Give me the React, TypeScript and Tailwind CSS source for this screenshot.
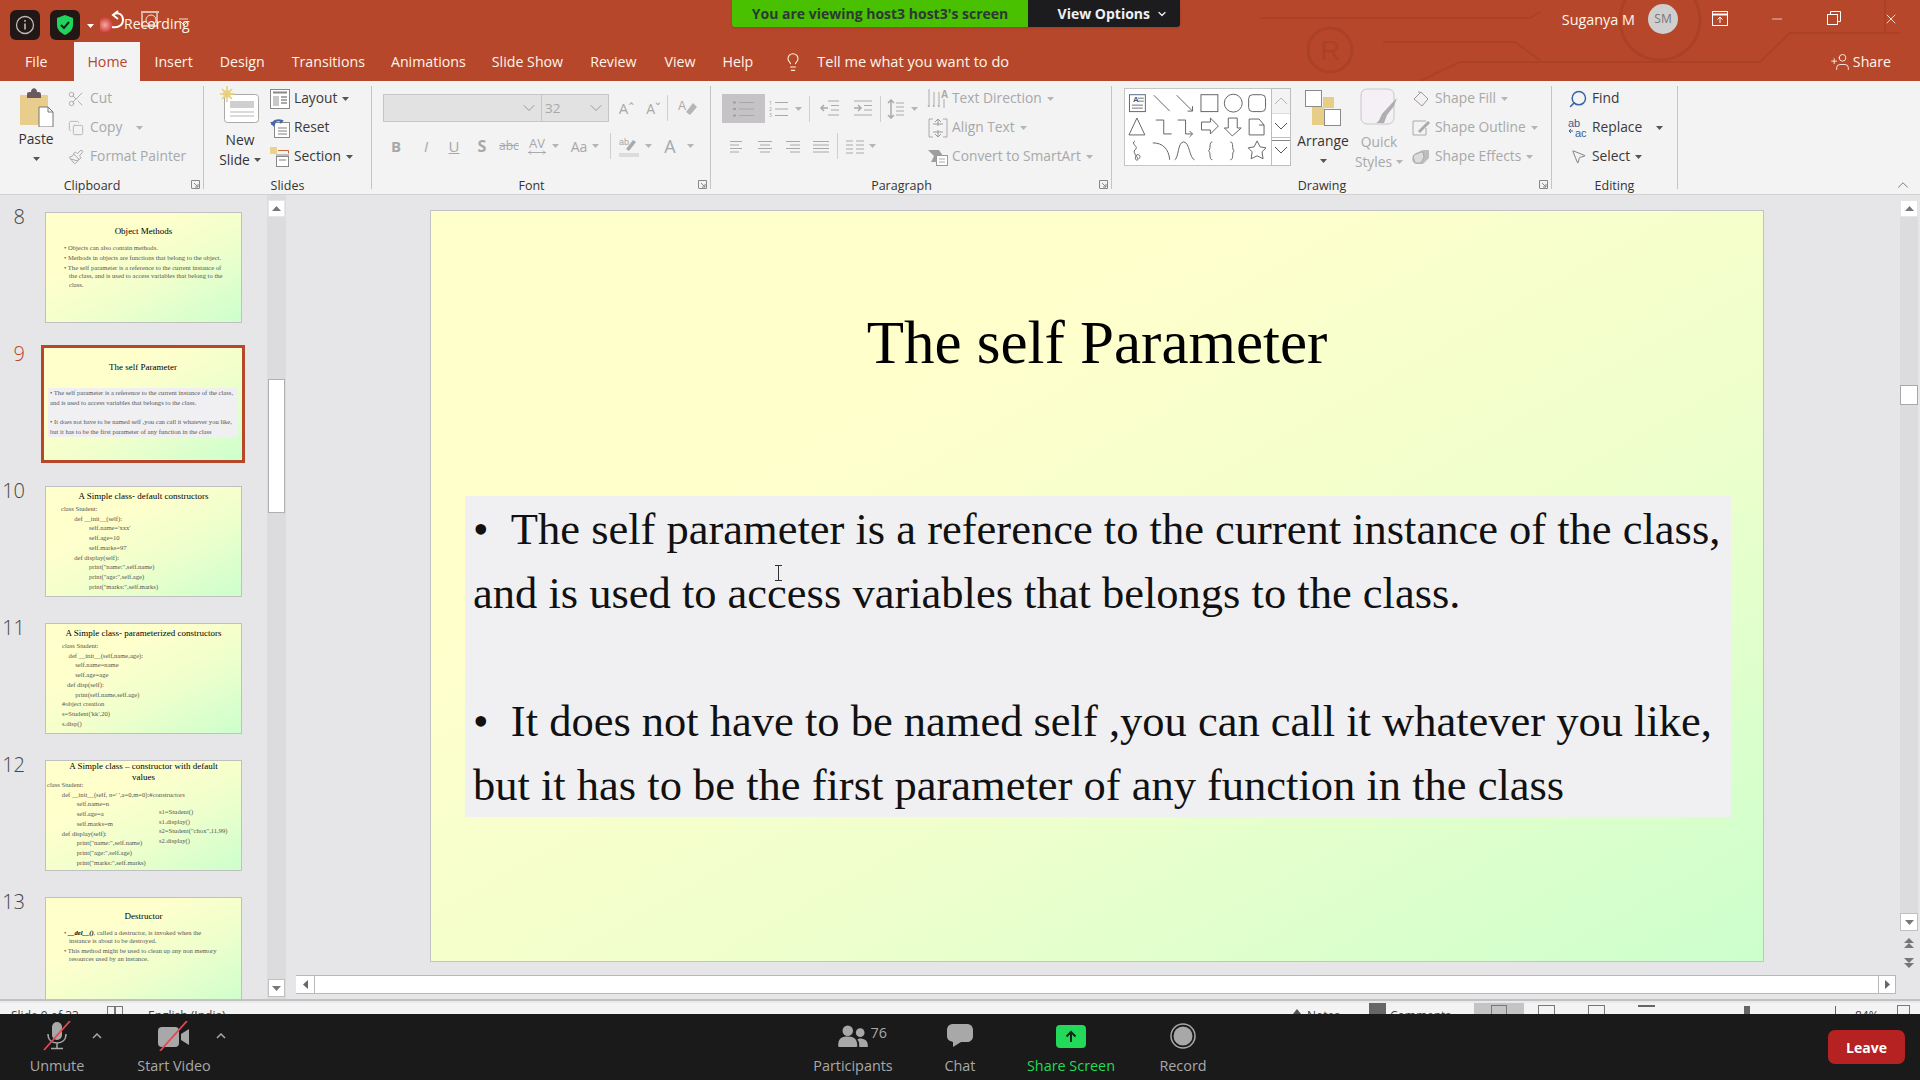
import React from "react";
import { ChevronDown, ChevronUp, Lightbulb, Scissors, Copy, Paintbrush, X, Minus, Search, MousePointer2, UserPlus } from "lucide-react";

const Caret = ({ light = false }: { light?: boolean }) => (
  <svg width="7" height="4" viewBox="0 0 7 4" className="inline-block shrink-0"><path d="M0 0h7L3.5 4z" fill={light ? "#b5b5b5" : "#555"} /></svg>
);

const Row = ({ icon, text, off = false, caret = false, far = false }: { icon: React.ReactNode; text: string; off?: boolean; caret?: boolean; far?: boolean }) => (
  <div className={off ? "flex h-[29px] items-center text-[#a8a8a8]" : "flex h-[29px] items-center text-[#3a3a3a]"}>
    <div className="flex w-[24px] shrink-0 items-center justify-center">{icon}</div>
    <span className="ml-[2px] whitespace-nowrap text-[13.8px]">{text}</span>
    {caret && <span className={far ? "ml-[14px] flex items-center" : "ml-[5px] flex items-center"}><Caret light={off} /></span>}
  </div>
);

const Launcher = () => (
  <svg width="9" height="9" viewBox="0 0 9 9" className="absolute bottom-[5px] right-[4px]"><path d="M.5 8V.5H8.500V8.500H.5M3 3l4 4M7 4v3H4" fill="none" stroke="#888" /></svg>
);

const Group = ({ label, widthClass, children, launcher = true }: { label: string; widthClass: string; children: React.ReactNode; launcher?: boolean }) => (
  <div className={`relative flex h-full shrink-0 flex-col ${widthClass}`}>
    <div className="h-[97px] overflow-hidden">{children}</div>
    <div className={launcher ? "pr-[20px] text-center text-[12.5px] leading-[16px] text-[#333]" : "pr-[1px] text-center text-[12.5px] leading-[16px] text-[#333]"}>{label}</div>
    {launcher && <Launcher />}
    <div className="absolute bottom-[5px] right-0 top-[5px] w-px bg-[#c4c4c4]" />
  </div>
);

const Sep = ({ h = "h-[26px]" }: { h?: string }) => <div className={`w-px shrink-0 bg-[#cfcfcf] ${h}`} />;

const PasteIcon = () => (
  <svg width="38" height="42" viewBox="0 0 38 42">
    <rect x="3" y="10" width="28" height="30" rx="1" fill="#e9cd8c" />
    <path d="M10 9c0-2 2-2 4-2 0-5 6-5 6 0 3 0 4 0 4 3v3H10z" fill="#6a5a5e" />
    <path d="M22 22h9l5 5v15H22z" fill="#fff" stroke="#777" />
    <path d="M31 22v5h5" fill="none" stroke="#777" />
  </svg>
);

const NewSlideIcon = () => (
  <svg width="40" height="42" viewBox="0 0 40 42">
    <rect x="4.500" y="9.500" width="34" height="28" rx="3" fill="#fff" stroke="#a9a9a9" />
    <rect x="10" y="16" width="24" height="7" fill="#cfcfcf" />
    <path d="M10 27h24M10 31h24" stroke="#b5b5b5" />
    <circle cx="7" cy="9" r="4" fill="#f0dc98" />
    <path d="M7 1v16M0 9h15M2 4l10 10M12 4 2 14" stroke="#e8cd7a" strokeWidth="1.500" />
  </svg>
);

const LayoutIcon = () => (
  <svg width="20" height="20" viewBox="0 0 20 20"><rect x=".5" y=".5" width="19" height="19" fill="#fff" stroke="#888" /><path d="M3 3.500h14" stroke="#888" strokeWidth="2" /><rect x="3" y="7" width="6" height="10" fill="#c8c8c8" /><path d="M11 8h6M11 11h6M11 14h6" stroke="#aaa" strokeWidth="2" /></svg>
);
const ResetIcon = () => (
  <svg width="20" height="20" viewBox="0 0 20 20"><rect x="4.500" y="4.500" width="15" height="15" fill="#fff" stroke="#888" /><path d="M8 10h9M8 13h9M8 16h9" stroke="#aaa" strokeWidth="1.500" /><path d="M2 7c1-4 6-6 10-4l-2 2" fill="none" stroke="#4668ad" strokeWidth="2" /><path d="M0 4l4 5 2-5z" fill="#4668ad" /></svg>
);
const SectionIcon = () => (
  <svg width="20" height="22" viewBox="0 0 20 22"><rect x="0" y="1" width="7" height="7" fill="#ecd28c" /><path d="M8 4.500h10.500v3" fill="none" stroke="#c96a3c" /><rect x="6.500" y="10.500" width="12" height="10" fill="#fff" stroke="#888" /><path d="M6 9h13" stroke="#888" /><path d="M9 14h7" stroke="#aaa" strokeWidth="1.500" /></svg>
);

const ParaIcon = ({ kind }: { kind: "l" | "c" | "r" | "j" }) => {
  const rows = kind === "l" ? [[1, 13], [1, 10], [1, 13], [1, 10]] : kind === "c" ? [[1, 15], [3, 13], [1, 15], [3, 13]] : kind === "r" ? [[1, 15], [5, 15], [1, 15], [5, 15]] : [[0, 16], [0, 16], [0, 16], [0, 16]];
  return <svg width="16" height="15" viewBox="0 0 16 15">{rows.map((r, i) => <path key={i} d={`M${r[0]} ${2.5 + i * 3.5}H${r[1]}`} stroke="#a9a9a9" />)}</svg>;
};

const Shapes = () => (
  <svg width="147" height="77" viewBox="0 0 147 77" fill="none" stroke="#666" className="-mt-[2px]">
    <rect x="4.500" y="7.500" width="16" height="17" fill="#fff" stroke="#5a6a80" /><text x="8" y="15" fontSize="8" fontWeight="700" fill="#3d5a95" stroke="none" fontFamily="Liberation Sans">A</text><path d="M7 18h11M7 21h11M13 11h6M13 14h6" stroke="#777" />
    <path d="M29 8l16 16M52 8l16 16" /><path d="M63 24h5v-5" />
    <rect x="76.500" y="7.500" width="17" height="17" /><circle cx="109" cy="16" r="9" /><rect x="124.500" y="7.500" width="17" height="17" rx="4" />
    <path d="M12 31l8 17H4zM31 33h8v14h8M53 33h8v14h7M65 44l3 3-3 3M77 35h9v-4l8 8-8 8v-4h-9zM104 31h9v10h4l-9 8-8-8h4zM125 32h10l5 6v10h-15zM140 38h-5" />
    <path d="M10 54c-5 3 5 6 0 9-3 3 4 8 3 10-2 2-4-3-1-5 3-1 4 2 2 4M28 56c10 0 16 6 17 17M50 73c4-1 3-18 9-18s6 17 11 18M88 55c-4 0-1 8-4 9 3 1 0 9 4 9M106 55c4 0 1 8 4 9-3 1 0 9-4 9M133 54l3 6 6 1-4 4 1 7-6-3-6 3 1-7-4-4 6-1z" />
  </svg>
);

const ScrollBtn = ({ d, cls }: { d: string; cls: string }) => (
  <div className={`flex items-center justify-center border-b border-[#bdbdbd] ${cls}`}>
    <svg width="14" height="8" viewBox="0 0 14 8"><path d={d} fill="none" stroke="#555" /></svg>
  </div>
);

const Ribbon = () => (
  <div className="flex h-[114px] shrink-0 border-b border-[#d2d2d2] bg-[#f3f3f3] font-['Open_Sans',sans-serif]">
    <Group label="Clipboard" widthClass="w-[204px]">
      <div className="flex pt-[4px]">
        <div className="flex w-[62px] shrink-0 flex-col items-center pl-[10px]">
          <PasteIcon />
          <span className="mt-[3px] text-[13.8px] leading-[18px] text-[#333]">Paste</span>
          <span className="mt-[5px] flex h-[12px] items-center"><Caret /></span>
        </div>
        <div className="-mt-[1px] ml-[2px]">
          <Row off icon={<Scissors size={18} strokeWidth={1.2} />} text="Cut" />
          <Row off caret far icon={<Copy size={16} strokeWidth={1.2} />} text="Copy" />
          <Row off icon={<Paintbrush size={16} strokeWidth={1.5} />} text="Format Painter" />
        </div>
      </div>
    </Group>

    <Group label="Slides" widthClass="w-[168px]" launcher={false}>
      <div className="flex pt-[4px]">
        <div className="flex w-[64px] shrink-0 flex-col items-center pl-[8px]">
          <NewSlideIcon />
          <span className="mt-[3px] text-[13.8px] leading-[20px] text-[#333]">New</span>
          <span className="flex items-center gap-[4px] text-[13.8px] leading-[20px] text-[#333]">Slide <Caret /></span>
        </div>
        <div className="-mt-[1px]">
          <Row caret icon={<LayoutIcon />} text="Layout" />
          <Row icon={<ResetIcon />} text="Reset" />
          <Row caret icon={<SectionIcon />} text="Section" />
        </div>
      </div>
    </Group>

    <Group label="Font" widthClass="w-[339px]">
      <div className="pl-[11px] pt-[13px]">
        <div className="flex items-center">
          <div className="flex h-[28px] w-[159px] items-center justify-end border border-[#c6c6c6] bg-[#e2e2e2] pr-[2px]"><ChevronDown size={20} strokeWidth={1} color="#8c8c8c" /></div>
          <div className="flex h-[28px] w-[67px] items-center justify-between border border-l-0 border-[#c6c6c6] bg-[#e2e2e2] pl-[3px] pr-[2px] text-[13.5px] text-[#a8a8a8]">32<ChevronDown size={20} strokeWidth={1} color="#8c8c8c" /></div>
          <div className="flex w-[31px] justify-center pl-[4px] text-[15px] text-[#a8a8a8]">Aˆ</div>
          <div className="flex w-[27px] justify-center text-[14px] text-[#a8a8a8]">Aˇ</div>
          <Sep />
          <div className="flex w-[40px] justify-center"><svg width="20" height="20" viewBox="0 0 20 20"><text x="0" y="12" fontSize="12" fill="#a8a8a8" fontFamily="Liberation Sans">A</text><path d="M8 14l7-9 4 4-7 8z" fill="#b5b5b5" /></svg></div>
        </div>
        <div className="mt-[10px] flex h-[28px] items-center text-[#a8a8a8]">
          <div className="w-[3px] shrink-0" />
          <span className="w-[20px] text-center text-[15px] font-bold">B</span>
          <span className="ml-[10px] w-[20px] text-center text-[15px] italic">I</span>
          <span className="ml-[7px] w-[22px] text-center text-[15px] underline">U</span>
          <span className="ml-[7px] w-[20px] text-center text-[16px] font-bold">S</span>
          <span className="ml-[6px] w-[22px] text-center text-[12px] line-through">abc</span>
          <span className="ml-[4px] flex w-[26px] flex-col items-center text-[13px] leading-[13px]">AV<svg width="18" height="5" viewBox="0 0 18 5"><path d="M0 2.500h18M3 .5 1 2.500l2 2M15 .5l2 2-2 2" fill="none" stroke="#aaa" /></svg></span>
          <span className="ml-[2px] flex w-[8px] items-center"><Caret light /></span>
          <span className="ml-[8px] w-[22px] text-center text-[14px]">Aa</span>
          <span className="ml-[2px] flex w-[8px] items-center"><Caret light /></span>
          <div className="ml-[10px]"><Sep /></div>
          <div className="ml-[7px] flex w-[22px] justify-center"><svg width="21" height="21" viewBox="0 0 21 21"><text x="0" y="9" fontSize="9" fill="#a8a8a8" fontFamily="Liberation Sans">ab</text><path d="M7 13l7-9 3 2-7 9z" fill="#aaa" /><rect x="0" y="17" width="20" height="4" fill="#dcdcdc" /></svg></div>
          <span className="ml-[5px] flex w-[8px] items-center"><Caret light /></span>
          <span className="ml-[7px] w-[20px] text-center text-[18px]">A</span>
          <span className="ml-[7px] flex w-[8px] items-center"><Caret light /></span>
        </div>
      </div>
    </Group>

    <Group label="Paragraph" widthClass="w-[401px]">
      <div className="flex pt-[4px]">
        <div className="w-[213px] shrink-0 pl-[11px] pt-[9px]">
          <div className="flex h-[29px] items-center">
            <div className="flex h-[29px] w-[43px] items-center justify-center bg-[#c5c3c6]"><svg width="22" height="18" viewBox="0 0 22 18"><path d="M6 2.500h15M6 9h15M6 15.500h15" stroke="#a8a8a8" /><path d="M0 2.500h3M0 9h3M0 15.500h3" stroke="#a0a0a0" strokeWidth="2" /></svg></div>
            <div className="ml-[3px] flex w-[22px] justify-center"><svg width="20" height="18" viewBox="0 0 20 18"><text x="0" y="5" fontSize="5" fill="#999">1</text><text x="0" y="11" fontSize="5" fill="#999">2</text><text x="0" y="17" fontSize="5" fill="#999">3</text><path d="M6 2.500h13M6 9h13M6 15.500h13" stroke="#a8a8a8" /></svg></div>
            <span className="ml-[5px] flex w-[8px] items-center"><Caret light /></span>
            <div className="ml-[6px]"><Sep /></div>
            <div className="ml-[10px] flex w-[20px] justify-center"><svg width="20" height="18" viewBox="0 0 20 18"><path d="M8 1h11M11 5.500h8M11 10h8M8 15h11" stroke="#aaa" /><path d="M8 8H1m3-3L1 8l3 3" stroke="#aaa" fill="none" strokeWidth="1.500" /></svg></div>
            <div className="ml-[13px] flex w-[20px] justify-center"><svg width="20" height="18" viewBox="0 0 20 18"><path d="M1 1h18M11 5.500h8M11 10h8M1 15h18" stroke="#aaa" /><path d="M1 8h7M5 5l3 3-3 3" stroke="#aaa" fill="none" strokeWidth="1.500" /></svg></div>
            <div className="ml-[7px]"><Sep /></div>
            <div className="ml-[5px] flex w-[20px] justify-center"><svg width="18" height="20" viewBox="0 0 18 20"><path d="M4 1v18M1 4l3-3 3 3M1 16l3 3 3-3" stroke="#aaa" fill="none" strokeWidth="1.500" /><path d="M9 4h8M9 8h8M9 12h8M9 16h8" stroke="#aaa" /></svg></div>
            <span className="ml-[5px] flex w-[8px] items-center"><Caret light /></span>
          </div>
          <div className="mt-[9px] flex h-[28px] items-center pl-[7px]">
            <div className="flex w-[16px] justify-center"><ParaIcon kind="l" /></div>
            <div className="ml-[12px] flex w-[16px] justify-center"><ParaIcon kind="c" /></div>
            <div className="ml-[12px] flex w-[16px] justify-center"><ParaIcon kind="r" /></div>
            <div className="ml-[12px] flex w-[16px] justify-center"><ParaIcon kind="j" /></div>
            <div className="ml-[8px]"><Sep /></div>
            <div className="ml-[8px] flex w-[18px] justify-center"><svg width="18" height="15" viewBox="0 0 18 15"><path d="M0 2h7M0 6h7M0 10h7M0 14h7M10 2h8M10 6h8M10 10h8M10 14h8" stroke="#aaa" /></svg></div>
            <span className="ml-[5px] flex w-[8px] items-center"><Caret light /></span>
          </div>
        </div>
        <div className="-mt-[1px] ml-[2px]">
          <Row off caret icon={<svg width="22" height="22" viewBox="0 0 22 22"><path d="M2 1v18M7 4v15M12 4v15M2 19l-1-2M7 19l-1-2M12 19l-1-2" stroke="#aaa" /><text x="14" y="10" fontSize="10" fontWeight="700" fill="#aaa" fontFamily="Liberation Sans">A</text><path d="M17 11v9" stroke="#aaa" /></svg>} text="Text Direction" />
          <Row off caret icon={<svg width="20" height="20" viewBox="0 0 20 20"><path d="M5 1H1v18h4M15 1h4v18h-4" stroke="#aaa" fill="#f4f0f4" /><path d="M5 6h10M5 14h10M10 2v6M10 12v6M7 4l3-3 3 3M7 16l3 3 3-3" stroke="#999" fill="none" /></svg>} text="Align Text" />
          <Row off caret icon={<svg width="20" height="18" viewBox="0 0 20 18"><path d="M0 2h11l4 6-4 6H3l3-6z" fill="#9e9e9e" /><rect x="8.500" y="7.500" width="11" height="10" fill="#fff" stroke="#999" /><path d="M11 11h6M11 14h6" stroke="#aaa" /></svg>} text="Convert to SmartArt" />
        </div>
      </div>
    </Group>

    <Group label="Drawing" widthClass="w-[440px]">
      <div className="flex pl-[12px] pt-[7px]">
        <div className="flex h-[78px] w-[147px] shrink-0 border border-r-0 border-[#c6c6c6] bg-white"><Shapes /></div>
        <div className="flex h-[78px] w-[20px] shrink-0 flex-col border border-[#bdbdbd] bg-[#f3f3f3]">
          <ScrollBtn d="M1 7l6-6 6 6" cls="h-[25px] opacity-40" />
          <ScrollBtn d="M1 1l6 6 6-6" cls="h-[24px] bg-white" />
          <div className="flex flex-1 flex-col items-center bg-white"><div className="mb-[3px] h-[3px] w-full border-b border-[#888]" /><svg width="14" height="12" viewBox="0 0 14 12"><path d="M1 3l6 6 6-6" fill="none" stroke="#555" /></svg></div>
        </div>
        <div className="ml-[6px] flex w-[52px] shrink-0 flex-col items-center">
          <svg width="36" height="36" viewBox="0 0 36 36" className="mt-[2px]"><rect x="18" y="7" width="11" height="11" fill="#e8cd86" /><rect x="7" y="17" width="12" height="18" fill="#e8cd86" /><rect x=".5" y=".5" width="16" height="16" fill="#fff" stroke="#8a8a8a" /><rect x="19.500" y="19.500" width="16" height="16" fill="#fff" stroke="#8a8a8a" /></svg>
          <span className="mt-[6px] text-[13.8px] leading-[18px] text-[#333]">Arrange</span>
          <span className="mt-[5px] flex h-[12px] items-center"><Caret /></span>
        </div>
        <div className="flex w-[60px] shrink-0 flex-col items-center">
          <svg width="38" height="38" viewBox="0 0 38 38" className="mt-[0px]"><rect x="1" y="1" width="33" height="35" rx="6" fill="#f5f0f5" stroke="#c8c8c8" /><path d="M22 26l10-11 5-5-3 8-7 9-3 8h-8c3-1 4-5 6-9z" fill="#aeaeae" /></svg>
          <span className="mt-[6px] text-[13.8px] leading-[20px] text-[#a8a8a8]">Quick</span>
          <span className="flex items-center gap-[4px] text-[13.8px] leading-[20px] text-[#a8a8a8]">Styles <Caret light /></span>
        </div>
        <div className="-mt-[4px]">
          <Row off caret icon={<svg width="18" height="18" viewBox="0 0 18 18"><path d="M2 9l7-7 7 7-6 7z" fill="#f5f0f5" stroke="#999" /><path d="M7 3V1" stroke="#999" /></svg>} text="Shape Fill" />
          <Row off caret icon={<svg width="20" height="18" viewBox="0 0 20 18"><path d="M15 2H2v14h13V9" fill="none" stroke="#aaa" /><path d="M7 12l10-10 2 2L9 14z" fill="#aaa" /></svg>} text="Shape Outline" />
          <Row off caret icon={<svg width="20" height="18" viewBox="0 0 20 18"><path d="M2 14c-2-3 0-7 3-9l7-3h6v8l-6 6H5z" fill="#bdbdbd" /><path d="M2 8c3-2 7-4 10-4l1 5-3 6H4z" fill="#dcdcdc" stroke="#aaa" /></svg>} text="Shape Effects" />
        </div>
      </div>
    </Group>

    <Group label="Editing" widthClass="w-[126px]" launcher={false}>
      <div className="pl-[14px] pt-[3px]">
        <Row icon={<Search size={20} strokeWidth={1.800} color="#3864a8" className="-scale-x-100" />} text="Find" />
        <Row caret far icon={<svg width="20" height="22" viewBox="0 0 20 22"><text x="0" y="10" fontSize="11" fill="#3b5d92" fontFamily="Liberation Sans">ab</text><text x="7" y="20" fontSize="11" fill="#3b5d92" fontFamily="Liberation Sans">ac</text><path d="M1 14h4M3 12l-2 2 2 2" stroke="#3b5d92" fill="none" /></svg>} text="Replace" />
        <Row caret icon={<MousePointer2 size={17} strokeWidth={1} color="#555" />} text="Select" />
      </div>
    </Group>
    <div className="relative flex-1">
      <ChevronUp size={18} strokeWidth={1} color="#555" className="absolute bottom-[0px] right-[8px]" />
    </div>
  </div>
);

const Thumb = ({ title, lines, selected = false, titleCls = "pt-[13px]" }: { title: string; lines: React.ReactNode; selected?: boolean; titleCls?: string }) => (
  <div className={selected
    ? "h-[118px] w-[204px] shrink-0 border-[3px] border-[#b7472a] bg-white -mt-[4px] -ml-[4px] mr-[-4px]"
    : "h-[111px] w-[197px] shrink-0 border border-[#c0c0c0]"}>
    <div className="h-full w-full overflow-hidden bg-linear-to-br from-[#ffffcc] from-30% via-[#f0ffcc] via-60% to-[#ccffcc] font-['Liberation_Serif',serif]">
      <div className={`text-center text-[9px] leading-[11px] text-black ${titleCls}`}>{title}</div>
      {lines}
    </div>
  </div>
);

const code = "whitespace-pre text-[6.600px] leading-[9.700px] text-[#555]";
const bullet = "pl-[5px] -indent-[5px]";

const thumbs: { n: number; node: React.ReactNode }[] = [
  { n: 8, node: <Thumb title="Object Methods" lines={<div className="mt-[7px] pl-[18px] pr-[8px] text-[6.600px] leading-[8.300px] text-[#555]"><div className={bullet}>• Objects can also contain methods.</div><div className={`mt-[1.700px] ${bullet}`}>• Methods in objects are functions that belong to the object.</div><div className={`mt-[1.700px] pr-[8px] ${bullet}`}>• The self parameter is a reference to the current instance of the class, and is used to access variables that belong to the class.</div></div>} /> },
  { n: 9, node: <Thumb selected title="The self Parameter" titleCls="pt-[14px]" lines={<div className="mx-[4px] mt-[15px] bg-[#f0f0f3] px-[2px] text-[6.600px] leading-[10px] text-[#555]"><div className="whitespace-nowrap">•  The self parameter is a reference to the current instance of the class,</div><div className="whitespace-nowrap">and is used to access variables that belongs to the class.</div><div className="mt-[8.500px] whitespace-nowrap">•  It does not have to be named self ,you can call it whatever you like,</div><div className="whitespace-nowrap">but it has to be the first parameter of any function in the class</div></div>} /> },
  { n: 10, node: <Thumb title="A Simple class- default constructors" titleCls="pt-[4px]" lines={<div className={`mt-[2px] pl-[15px] ${code}`}>{"class Student:\n        def __init__(self):\n                 self.name='xxx'\n                 self.age=10\n                 self.marks=97\n        def display(self):\n                 print(\"name:\",self.name)\n                 print(\"age:\",self.age)\n                 print(\"marks:\",self.marks)"}</div>} /> },
  { n: 11, node: <Thumb title="A Simple class- parameterized constructors" titleCls="pt-[4px]" lines={<div className={`mt-[2px] pl-[16px] ${code}`}>{"class Student:\n    def __init__(self,name,age):\n        self.name=name\n        self.age=age\n   def disp(self):\n        print(self.name,self.age)\n#object creation\ns=Student('kk',20)\ns.disp()"}</div>} /> },
  { n: 12, node: <Thumb title="A Simple class – constructor with default values" titleCls="px-[20px]" lines={<div className="relative -mt-[3px]"><div className={`pl-[1px] ${code}`}>{"class Student:\n         def __init__(self, n=' ',a=0,m=0):#constructors\n                  self.name=n\n                  self.age=a\n                  self.marks=m\n         def display(self):\n                  print(\"name:\",self.name)\n                  print(\"age:\",self.age)\n                  print(\"marks:\",self.marks)"}</div><div className={`absolute left-[113px] top-[27px] ${code}`}>{"s1=Student()\ns1.display()\ns2=Student(\"chox\",11,99)\ns2.display()"}</div></div>} /> },
  { n: 13, node: <Thumb title="Destructor" titleCls="pt-[13px]" lines={<div className="mt-[7px] pl-[18px] pr-[18px] text-[6.600px] leading-[8px] text-[#555]"><div className={bullet}>• <b className="italic text-black">__del__()</b>, called a destructor, is invoked when the instance is about to be destroyed.</div><div className={`mt-[2px] ${bullet}`}>• This method might be used to clean up any non memory resources used by an instance.</div></div>} /> },
];

const Sidebar = () => (
  <div className="flex h-full w-[290px] shrink-0 bg-[#e6e6e8]">
    <div className="h-full w-[267px] shrink-0 overflow-hidden pt-[17px]">
      <div className="flex flex-col gap-[26px]">
        {thumbs.map((t) => (
          <div key={t.n} className="flex h-[111px]">
            <div className={t.n === 9 ? "-mt-[5px] w-[25px] shrink-0 text-right font-['Open_Sans',sans-serif] text-[20px] font-light leading-[20px] text-[#b7472a]" : "-mt-[5px] w-[25px] shrink-0 text-right font-['Open_Sans',sans-serif] text-[20px] font-light leading-[20px] text-[#444]"}>{t.n}</div>
            <div className="ml-[20px]">{t.node}</div>
          </div>
        ))}
      </div>
    </div>
    <div className="flex h-full w-[19px] flex-col bg-[#dcdcde] px-px pt-[5px]">
      <div className="flex h-[17px] shrink-0 items-center justify-center border border-[#e6e6e8] bg-white"><svg width="9" height="5" viewBox="0 0 9 5"><path d="M4.500 0L9 5H0z" fill="#777" /></svg></div>
      <div className="mt-[162px] h-[134px] shrink-0 border border-[#b0b0b0] bg-white" />
      <div className="flex-1" />
      <div className="mb-[2px] flex h-[18px] shrink-0 items-center justify-center border border-[#c0c0c0] bg-white"><svg width="9" height="5" viewBox="0 0 9 5"><path d="M0 0h9L4.500 5z" fill="#777" /></svg></div>
    </div>
  </div>
);

const MainSlide = () => (
  <div className="relative flex h-[752px] w-[1334px] shrink-0 flex-col border border-[#c3c3c3] bg-linear-to-br from-[#ffffcc] from-30% via-[#f0ffcc] via-60% to-[#ccffcc] font-['Liberation_Serif',serif] text-black">
    <div className="mt-[95px] h-[74px] text-center text-[61px] leading-[74px]">The self Parameter</div>
    <div className="ml-[34px] mt-[116px] h-[321px] w-[1266px] bg-[#f0f0f3] pl-[8px] pt-[1px] text-[44.500px] leading-[64px] text-[#111]">
      <div className="whitespace-nowrap">•&nbsp;&nbsp;The self parameter is a reference to the current instance of the class,</div>
      <div className="whitespace-nowrap">and is used to access variables that belongs to the class.</div>
      <div className="h-[64px]" />
      <div className="whitespace-nowrap">•&nbsp;&nbsp;It does not have to be named self ,you can call it whatever you like,</div>
      <div className="whitespace-nowrap">but it has to be the first parameter of any function in the class</div>
    </div>
    <svg width="9" height="16" viewBox="0 0 9 16" className="absolute left-[343px] top-[354px]"><path d="M1 .5h7M1 15.500h7M4.500 .5v15" stroke="#333" /></svg>
  </div>
);

const Arrow2 = ({ up }: { up: boolean }) => (
  <svg width="10" height="11" viewBox="0 0 10 11" className="mx-auto"><path d={up ? "M5 0l5 5H0zM5 5l5 5H0z" : "M0 0h10L5 5zM0 5h10L5 10z"} fill="#777" /></svg>
);

const Main = () => (
  <div className="flex h-full flex-1 bg-[#e6e6e8]">
    <div className="flex h-full w-[1606px] shrink-0 flex-col">
      <div className="flex-1 pl-[140px] pt-[15px]"><MainSlide /></div>
      <div className="mb-[5px] ml-[6px] flex h-[19px] w-[1600px] shrink-0 border-y border-[#b8b8b8] bg-white">
        <div className="flex w-[19px] items-center justify-center border-r border-[#b8b8b8]"><svg width="5" height="9" viewBox="0 0 5 9"><path d="M5 0v9L0 4.500z" fill="#666" /></svg></div>
        <div className="flex-1" />
        <div className="flex w-[18px] items-center justify-center border-x border-[#b8b8b8]"><svg width="5" height="9" viewBox="0 0 5 9"><path d="M0 0v9l5-4.500z" fill="#666" /></svg></div>
      </div>
    </div>
    <div className="ml-[4px] flex h-full w-[18px] shrink-0 flex-col pt-[5px]">
      <div className="flex h-[713px] flex-col bg-[#dcdcde]">
        <div className="flex h-[17px] shrink-0 items-center justify-center border border-[#e6e6e8] bg-white"><svg width="9" height="5" viewBox="0 0 9 5"><path d="M4.500 0L9 5H0z" fill="#777" /></svg></div>
        <div className="mt-[168px] h-[20px] shrink-0 border border-[#a8a8a8] bg-white" />
        <div className="flex-1" />
      </div>
      <div className="flex h-[18px] shrink-0 items-center justify-center border border-[#c0c0c0] bg-white"><svg width="9" height="5" viewBox="0 0 9 5"><path d="M0 0h9L4.500 5z" fill="#777" /></svg></div>
      <div className="mt-[7px]"><Arrow2 up /></div>
      <div className="mt-[9px]"><Arrow2 up={false} /></div>
    </div>
  </div>
);

const Status = () => (
  <div className="flex h-[15px] shrink-0 flex-col bg-[#f3f3f3]">
    <div className="h-[4px] shrink-0 border-t-2 border-[#c2c2c2] bg-[#e9e9e9]" />
    <div className="relative flex flex-1 items-start overflow-hidden whitespace-nowrap pl-[11px] pt-[6px] font-['Open_Sans',sans-serif] text-[12px] leading-[14px] text-[#444]">
      <span className="w-[96px]">Slide 9 of 33</span>
      <svg width="17" height="12" viewBox="0 0 17 12" className="-mt-[3px]"><rect x=".5" y=".5" width="7" height="11" fill="none" stroke="#777" /><rect x="8.500" y=".5" width="7" height="11" fill="none" stroke="#777" /></svg>
      <span className="ml-[24px] w-[1145px]">English (India)</span>
      <span className="flex w-[181px]"><svg width="8" height="5" viewBox="0 0 8 5" className="mr-[6px]"><path d="M4 0l4 5H0z" fill="#555" /></svg>Notes<span className="-mt-[6px] ml-[29px] h-[20px] w-[17px] bg-[#666]" /><span className="ml-[4px]">Comments</span></span>
      <span className="-mt-[6px] flex h-[20px] w-[50px] justify-center bg-[#c5c3c5] pt-[2px]"><span className="h-[16px] w-[16px] border border-[#777]" /></span>
      <span className="-mt-[4px] ml-[14px] h-[16px] w-[17px] border border-[#777]" />
      <span className="-mt-[4px] ml-[33px] h-[16px] w-[17px] border border-[#777]" />
      <span className="-mt-[4px] ml-[33px] h-[16px] w-[17px] border-t-2 border-[#666]" />
      <span className="-mt-[3px] ml-[89px] h-[14px] w-[6px] bg-[#666]" />
      <span className="-mt-[3px] ml-[85px] h-[14px] w-px bg-[#666]" />
      <span className="ml-[19px]">84%</span>
      <span className="-mt-[4px] ml-[18px] h-[16px] w-[13px] border border-[#777]" />
    </div>
  </div>
);

const BarBtn = ({ icon, label, cls = "text-[#a8a8a8]", wcls }: { icon: React.ReactNode; label: string; cls?: string; wcls: string }) => (
  <div className={`flex h-full shrink-0 flex-col items-center ${wcls}`}>
    <div className="relative flex h-[38px] items-center justify-center pt-[6px]">{icon}</div>
    <div className={`mt-[5px] whitespace-nowrap text-[14.400px] leading-[18px] ${cls}`}>{label}</div>
  </div>
);

const UpCaret = () => <svg width="10" height="6" viewBox="0 0 10 6"><path d="M1 5l4-4 4 4" fill="none" stroke="#a8a8a8" strokeWidth="1.500" /></svg>;

const ZoomBar = () => (
  <div className="flex h-[66px] shrink-0 bg-[#1a1a1a] font-['Open_Sans',sans-serif]">
    <BarBtn wcls="ml-[7px] w-[100px]" label="Unmute" icon={
      <svg width="30" height="30" viewBox="0 0 30 30"><rect x="10" y="1" width="10" height="18" rx="5" fill="#a8a8a8" /><path d="M6 13c0 6 4 9 9 9s9-3 9-9M15 22v5M9 27.500h12" fill="none" stroke="#a8a8a8" strokeWidth="1.500" /><path d="M2 29L28 0" stroke="#e5484d" strokeWidth="1.800" /></svg>} />
    <div className="-ml-[15px] w-[15px] pt-[19px]"><UpCaret /></div>
    <BarBtn wcls="ml-[12px] w-[110px]" label="Start Video" icon={
      <svg width="32" height="30" viewBox="0 0 32 30"><rect x="0" y="6" width="21" height="20" rx="4" fill="#a8a8a8" /><path d="M23 13l8-5v16l-8-5z" fill="#a8a8a8" /><path d="M2 30L29 0" stroke="#e5484d" strokeWidth="1.800" /></svg>} />
    <div className="-ml-[13px] w-[13px] pt-[19px]"><UpCaret /></div>
    <div className="w-[574px] shrink-0" />
    <BarBtn wcls="w-[100px]" label="Participants" icon={
      <div className="relative">
        <svg width="31" height="23" viewBox="0 0 32 24"><circle cx="10" cy="6" r="5.500" fill="#a8a8a8" /><circle cx="23" cy="8" r="4.500" fill="#a8a8a8" /><path d="M0 22c0-8 3-10 10-10s10 3 10 10c0 1-1 1-2 1H2c-1 0-2 0-2-1zM22 14c6 0 9 2 9 8 0 1 0 1-1 1h-8c0-4 0-6-2-8z" fill="#a8a8a8" /></svg>
        <span className="absolute left-[33px] -top-[1px] text-[14.400px] leading-[18px] text-[#a8a8a8]">76</span>
      </div>} />
    <BarBtn wcls="ml-[7px] w-[100px]" label="Chat" icon={
      <svg width="26" height="24" viewBox="0 0 26 24"><path d="M6 0h14c3 0 6 2 6 6v6c0 4-3 6-6 6h-6l-8 5v-5c-3-1-6-2-6-6V6c0-4 3-6 6-6z" fill="#a8a8a8" /></svg>} />
    <BarBtn wcls="ml-[11px] w-[100px]" label="Share Screen" cls="text-[#23d959]" icon={
      <div className="flex h-[23px] w-[30px] items-center justify-center rounded-[4px] bg-[#23d959]"><svg width="12" height="13" viewBox="0 0 12 13"><path d="M6 12V2M1.500 6.500 6 2l4.500 4.500" fill="none" stroke="#10291a" strokeWidth="2" /></svg></div>} />
    <BarBtn wcls="ml-[12px] w-[100px]" label="Record" icon={
      <svg width="26" height="26" viewBox="0 0 26 26"><circle cx="13" cy="13" r="12" fill="none" stroke="#a8a8a8" strokeWidth="1.500" /><circle cx="13" cy="13" r="9.500" fill="#a8a8a8" /></svg>} />
    <div className="flex-1" />
    <div className="mr-[15px] mt-[16px] flex h-[34px] w-[77px] items-center justify-center rounded-[7px] bg-[#b62222] text-[14px] font-bold text-white">Leave</div>
  </div>
);

const Circuit = () => (
  <svg className="absolute right-0 top-0" width="660" height="81" viewBox="0 0 660 81" fill="none" stroke="#ab4226" strokeWidth="2">
    <circle cx="70" cy="50" r="22" strokeWidth="3" />
    <text x="60" y="60" fontSize="28" fill="#ab4226" stroke="none" fontFamily="Liberation Sans">R</text>
    <path d="M123 42h132l25 18M0 18h270l10-6" />
    <circle cx="400" cy="20" r="40" strokeWidth="3" />
    <path d="M160 81l40-19h300l30-29h110M625 0v33" />
  </svg>
);

const TitleBar = () => (
  <div className="relative h-[81px] shrink-0 overflow-hidden bg-[#b7472a] font-['Open_Sans',sans-serif] text-[#fff5ea]">
    <Circuit />
    <div className="relative flex h-[42px] items-start">
      <div className="ml-[10px] mt-[10px] flex h-[30px] w-[30px] items-center justify-center rounded-[6px] bg-[#211815]"><svg width="20" height="20" viewBox="0 0 20 20"><circle cx="10" cy="10" r="8.500" fill="none" stroke="#bbb" strokeWidth="1.300" /><path d="M10 8.500v6M10 5v1.800" stroke="#bbb" strokeWidth="1.600" /></svg></div>
      <div className="ml-[10px] mt-[10px] flex h-[30px] w-[30px] items-center justify-center rounded-[6px] bg-[#211815]"><svg width="16" height="20" viewBox="0 0 16 20"><path d="M8 0l8 3v7c0 5-4 8-8 10-4-2-8-5-8-10V3z" fill="#22d35c" /><path d="M4 10l3 3 5-6" fill="none" stroke="#102818" strokeWidth="2" /></svg></div>
      <div className="ml-[7px] mt-[24px]"><svg width="7" height="4" viewBox="0 0 7 4"><path d="M0 0h7L3.500 4z" fill="#fff" /></svg></div>
      <div className="relative ml-[6px] mt-[10px] flex h-[30px] w-[100px] items-start">
        <svg width="100" height="30" viewBox="0 0 100 30" className="absolute left-0 top-0">
          <defs><radialGradient id="rb"><stop offset="0" stopColor="#f7a7a0" /><stop offset="1" stopColor="#c93a34" /></radialGradient></defs>
          <circle cx="5" cy="15" r="8" fill="url(#rb)" />
          <path d="M11 17c5 1 11-1 11-7s-5-8-9-6M17 1l-5 4 5 4" fill="none" stroke="#fff" strokeWidth="2" transform="translate(1 0)" />
          <path d="M41 2h18M42 3v13h15V3" fill="none" stroke="#f0e2d8" strokeWidth="1.300" /><circle cx="51" cy="10" r="5" fill="none" stroke="#f0e2d8" />
          <path d="M79 9h9M80 11l4 4 4-4" fill="none" stroke="#f0e2d8" />
        </svg>
        <span className="absolute left-[24px] top-[4px] text-[14px] leading-[20px]">Recording</span>
      </div>
      <div className="flex-1" />
      <span className="mt-[10px] text-[14.400px] leading-[20px]">Suganya M</span>
      <div className="ml-[13px] mt-[4px] flex h-[30px] w-[30px] items-center justify-center rounded-full bg-[#cfcfcf] text-[12px] text-[#777]">SM</div>
      <div className="ml-[34px] mt-[11px]"><svg width="16" height="15" viewBox="0 0 16 15"><rect x=".5" y=".5" width="15" height="14" fill="none" stroke="#fff" /><path d="M0 3.500h16" stroke="#fff" strokeWidth="2" /><path d="M8 12V6M5.500 8.500 8 6l2.500 2.500" fill="none" stroke="#fff" /></svg></div>
      <div className="ml-[41px] mt-[11px]"><Minus size={16} strokeWidth={1} color="#fff" /></div>
      <div className="ml-[42px] mt-[11px]"><svg width="14" height="14" viewBox="0 0 14 14"><rect x=".5" y="3.500" width="10" height="10" fill="none" stroke="#fff" /><path d="M3.500 3V.5h10v10H11" fill="none" stroke="#fff" /></svg></div>
      <div className="ml-[42px] mr-[21px] mt-[11px]"><X size={16} strokeWidth={1.200} color="#fff" /></div>
    </div>
    <div className="relative flex h-[39px] items-center text-[14.200px]">
      <span className="ml-[25px]">File</span>
      <span className="ml-[27px] flex h-[39px] w-[66px] items-center justify-center bg-[#f3f3f3] text-[#b7472a]">Home</span>
      <span className="ml-[14px]">Insert</span>
      <span className="ml-[27px]">Design</span>
      <span className="ml-[27px]">Transitions</span>
      <span className="ml-[26px]">Animations</span>
      <span className="ml-[26px]">Slide Show</span>
      <span className="ml-[27px]">Review</span>
      <span className="ml-[28px]">View</span>
      <span className="ml-[27px]">Help</span>
      <span className="ml-[30px]"><Lightbulb size={20} strokeWidth={1.300} color="#fff5d8" /></span>
      <span className="ml-[14px] text-[14.600px]">Tell me what you want to do</span>
      <div className="flex-1" />
      <UserPlus size={20} strokeWidth={1} color="#fff" className="-scale-x-100" />
      <span className="ml-[3px] mr-[29px]">Share</span>
    </div>
    <div className="absolute left-[732px] top-0 flex h-[27px] w-[448px] overflow-hidden rounded-b-[3px] text-[14px] font-bold shadow-sm">
      <div className="flex w-[296px] items-center justify-center bg-[#49c000] text-[#2d3a33]">You are viewing host3 host3's screen</div>
      <div className="flex flex-1 items-center justify-end gap-[6px] bg-[#1c1c1e] pr-[12px] text-[#eef0f4]">View Options <ChevronDown size={12} strokeWidth={2.500} color="#eee" /></div>
    </div>
  </div>
);

export default function App() {
  return (
    <div className="flex h-[1080px] w-[1920px] flex-col overflow-hidden bg-[#e6e6e8]">
      <TitleBar />
      <Ribbon />
      <div className="flex h-[804px] shrink-0"><Sidebar /><Main /></div>
      <Status />
      <ZoomBar />
    </div>
  );
}
